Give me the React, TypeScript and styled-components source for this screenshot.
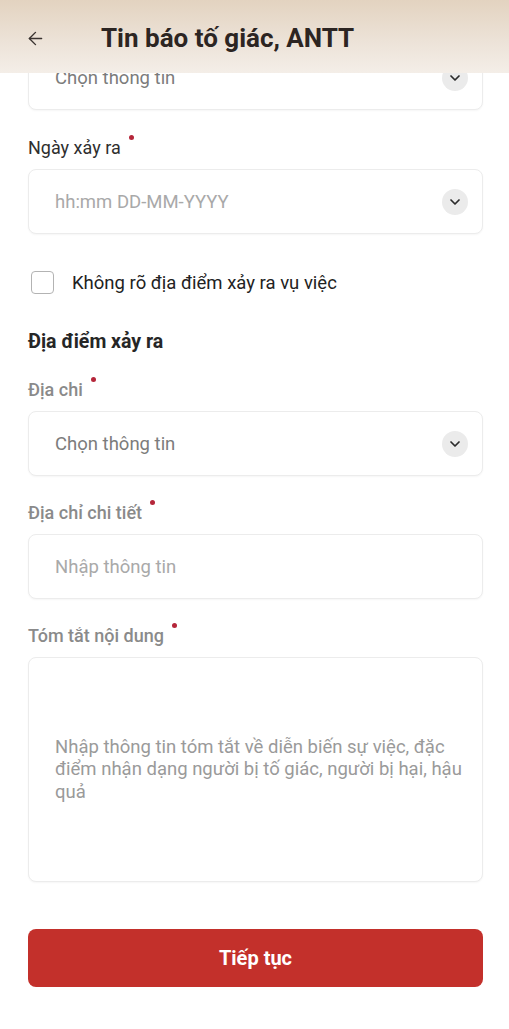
import React from "react";
import styled, { createGlobalStyle } from "styled-components";
import { ArrowLeft, ChevronDown } from "lucide-react";

const GlobalStyle = createGlobalStyle`
    html, body {
        margin: 0;
        padding: 0;
        background: #ffffff;
        font-family: Roboto, "Noto Sans", "Liberation Sans", sans-serif;
    }
    * {
        box-sizing: border-box;
    }
`;

const Screen = styled.div`
    position: relative;
    width: 509px;
    min-height: 1029px;
    background: #ffffff;
`;

const Header = styled.header`
    position: absolute;
    z-index: 10;
    top: 0;
    left: 0;
    right: 0;
    height: 73px;
    display: flex;
    align-items: center;
    padding: 0 0 0 25px;
    background: linear-gradient(180deg, #e3d3c0 0%, #ece2d7 55%, #f4eee8 100%);

    .Back {
        display: flex;
        color: #3a3330;
        margin-top: 3px;
    }
    .Title {
        margin: 3px 0 0 55px;
        font-size: 26px;
        font-weight: 700;
        color: #2c2522;
    }
`;

const Form = styled.main`
    display: flex;
    flex-direction: column;
    padding: 45px 26px 0 28px;
`;

const Box = styled.div<{ $height?: number }>`
    display: flex;
    align-items: center;
    justify-content: space-between;
    height: ${({ $height }) => $height ?? 65}px;
    padding: 0 14px 0 26px;
    border: 1px solid #ececec;
    border-radius: 8px;
    background: #ffffff;
    box-shadow: 0 1px 2px rgba(0, 0, 0, 0.04);
`;

const Placeholder = styled.span<{ $tone?: "light" | "mid" }>`
    font-size: 18.5px;
    line-height: 22px;
    color: ${({ $tone }) => ($tone === "mid" ? "#7c7c7c" : "#a9a9a9")};
`;

const AreaText = styled.span`
    font-size: 18.5px;
    line-height: 22.5px;
    color: #9a9a9a;
`;

const ChevronCircle = styled.span`
    flex-shrink: 0;
    display: flex;
    align-items: center;
    justify-content: center;
    width: 26px;
    height: 26px;
    border-radius: 50%;
    background: #ebebeb;
    color: #2b2b2b;
`;

const Label = styled.div<{ $muted?: boolean; $top: number }>`
    display: flex;
    align-items: flex-start;
    margin: ${({ $top }) => $top}px 0 11px;
    height: 20px;
    font-size: 18px;
    line-height: 20px;
    font-weight: ${({ $muted }) => ($muted ? 500 : 400)};
    color: ${({ $muted }) => ($muted ? "#8a8a8a" : "#2e2e2e")};

    .Dot {
        width: 5px;
        height: 5px;
        margin: -3px 0 0 8px;
        border-radius: 50%;
        background: #b5263a;
    }
`;

const CheckRow = styled.label`
    display: flex;
    align-items: center;
    margin: 37px 0 0 3px;
    font-size: 18.5px;
    color: #222222;

    .Check {
        width: 23px;
        height: 23px;
        border: 1.5px solid #b3b3b3;
        border-radius: 4px;
        margin-right: 18px;
    }
`;

const SectionTitle = styled.h3`
    margin: 38px 0 0;
    height: 20px;
    font-size: 19.5px;
    line-height: 20px;
    font-weight: 700;
    color: #262626;
`;

const SubmitButton = styled.button`
    margin-top: 47px;
    height: 58px;
    width: 100%;
    border: none;
    border-radius: 8px;
    background: #c3302b;
    color: #ffffff;
    font-family: inherit;
    font-size: 20px;
    font-weight: 700;
`;

type FieldProps = { label: string; muted?: boolean; top: number };

const FieldLabel = ({ label, muted, top }: FieldProps) => (
    <Label $muted={muted} $top={top}>
        {label}
        <span className="Dot" />
    </Label>
);

const Select = ({ text, tone }: { text: string; tone?: "light" | "mid" }) => (
    <Box>
        <Placeholder $tone={tone}>{text}</Placeholder>
        <ChevronCircle>
            <ChevronDown size={16} strokeWidth={2.6} />
        </ChevronCircle>
    </Box>
);

export default function App() {
    return (
        <Screen>
            <GlobalStyle />
            <Header>
                <span className="Back">
                    <ArrowLeft size={21} strokeWidth={1.6} />
                </span>
                <span className="Title">Tin báo tố giác, ANTT</span>
            </Header>
            <Form>
                <Select text="Chọn thông tin" tone="mid" />

                <FieldLabel label="Ngày xảy ra" top={28} />
                <Select text="hh:mm DD-MM-YYYY" />

                <CheckRow>
                    <span className="Check" />
                    Không rõ địa điểm xảy ra vụ việc
                </CheckRow>

                <SectionTitle>Địa điểm xảy ra</SectionTitle>

                <FieldLabel label="Địa chi" muted top={28} />
                <Select text="Chọn thông tin" tone="mid" />

                <FieldLabel label="Địa chỉ chi tiết" muted top={27} />
                <Box>
                    <Placeholder>Nhập thông tin</Placeholder>
                </Box>

                <FieldLabel label="Tóm tắt nội dung" muted top={27} />
                <Box $height={225}>
                    <AreaText>
                        Nhập thông tin tóm tắt về diễn biến sự việc, đặc điểm nhận dạng người bị tố giác, người bị hại, hậu quả
                    </AreaText>
                </Box>

                <SubmitButton>Tiếp tục</SubmitButton>
            </Form>
        </Screen>
    );
}
